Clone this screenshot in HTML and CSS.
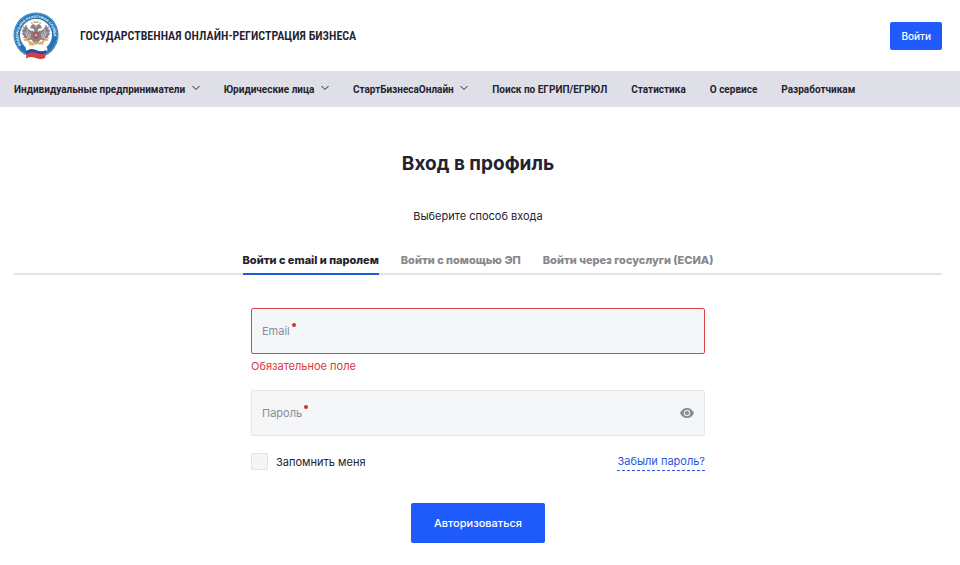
FILE: index.html
```
<!DOCTYPE html>
<html lang="ru">
<head>
  <meta charset="UTF-8" />
  <meta name="viewport" content="width=device-width, initial-scale=1.0" />
  <title>Вход в профиль</title>
  <link rel="stylesheet" href="styles.css">
</head>
<body>
  <!-- Header -->
  <header class="header">
    <a class="brand" href="#">
      <svg class="brand-logo" viewBox="0 0 92 96" aria-hidden="true">
        <defs>
          <path id="ring" d="M16.500 67 A35.500 35.500 0 1 1 75.500 67" />
        </defs>
        <circle cx="46" cy="46" r="45" fill="#2473b5" />
        <circle cx="46" cy="46" r="43" fill="none" stroke="#8ebbdc" stroke-width="1" />
        <circle cx="46" cy="46" r="32" fill="#fff" />
        <text class="ring-text"><textPath href="#ring">ФЕДЕРАЛЬНАЯ НАЛОГОВАЯ СЛУЖБА</textPath></text>
        <!-- eagle -->
        <g fill="#8b8087" stroke="#77707b" stroke-width="1">
          <path d="M40 38 C34 39 29 35 26 26 L24 32 L21 29 L22 37 L18 35 L21 43 L18 43 L23 49 L21 51 L28 53 L27 57 L35 55 L40 50 Z" />
          <path d="M52 38 C58 39 63 35 66 26 L68 32 L71 29 L70 37 L74 35 L71 43 L74 43 L69 49 L71 51 L64 53 L65 57 L57 55 L52 50 Z" />
          <path d="M43 42 L42 33 L35 32 L37 27 C40 23 45 25 45 30 L46 34 L47 30 C47 25 52 23 55 27 L57 32 L50 33 L49 42 Z" />
          <path d="M38 40 H54 L55 55 L46 65 L37 55 Z" />
        </g>
        <path d="M28 35 l3 14 M24 40 l5 10 M64 35 l-3 14 M68 40 l-5 10 M34 41 v11 M58 41 v11" stroke="#e0dde2" stroke-width="1.500" />
        <path d="M42 22 l-1 -5 l5 3 l5 -3 l-1 5 Z M36 24 l1 -4 l5 2 M50 22 l5 -2 l1 4" fill="#d9a45b" />
        <path d="M41 41 H51 V50 L46 54 L41 50 Z" fill="#b84149" />
        <path d="M46 43 v7 M43 46 h6" stroke="#eee" stroke-width="1.500" />
        <path d="M22 57 l11 -7 M70 57 l-11 -7 M30 58 q8 8 16 3 q8 5 16 -3 M32 65 h11 M49 63 h12" fill="none" stroke="#e0aa61" stroke-width="4" />
        <!-- flag -->
        <path d="M25 70 Q36 64 46 70 T68 70 L69 78 Q58 82 46 77 T27 79 Z" fill="#fff" />
        <path d="M26 78 Q36 71 46 76 T67 76 L66 84 Q56 88 46 83 T27 85 Z" fill="#254f9d" />
        <path d="M27 84 Q36 78 46 82 T66 82 L64 92 Q55 96 46 92 T26 93 Z" fill="#d33f48" />
      </svg>
      <span class="brand-name">ГОСУДАРСТВЕННАЯ ОНЛАЙН-РЕГИСТРАЦИЯ БИЗНЕСА</span>
    </a>
    <button class="login-button" type="button">Войти</button>
  </header>

  <!-- Main menu -->
  <nav class="menu">
    <a href="#">Индивидуальные предприниматели
      <svg class="chevron" viewBox="0 0 8 6" aria-hidden="true"><path d="M0.500 1 L4 4.500 L7.500 1" /></svg>
    </a>
    <a href="#">Юридические лица
      <svg class="chevron" viewBox="0 0 8 6" aria-hidden="true"><path d="M0.500 1 L4 4.500 L7.500 1" /></svg>
    </a>
    <a href="#">СтартБизнесаОнлайн
      <svg class="chevron" viewBox="0 0 8 6" aria-hidden="true"><path d="M0.500 1 L4 4.500 L7.500 1" /></svg>
    </a>
    <a href="#">Поиск по ЕГРИП/ЕГРЮЛ</a>
    <a href="#">Статистика</a>
    <a href="#">О сервисе</a>
    <a href="#">Разработчикам</a>
  </nav>

  <main class="content">
    <h1>Вход в профиль</h1>
    <p class="subtitle">Выберите способ входа</p>

    <div class="tabs" role="tablist">
      <button class="tab active" type="button" role="tab" aria-selected="true">Войти с email и паролем</button>
      <button class="tab" type="button" role="tab" aria-selected="false">Войти с помощью ЭП</button>
      <button class="tab" type="button" role="tab" aria-selected="false">Войти через госуслуги (ЕСИА)</button>
    </div>

    <!-- Login form -->
    <form class="login-form">
      <div class="field field-error">
        <label for="email">Email</label>
        <input type="email" id="email" aria-describedby="emailError" />
      </div>
      <p class="error" id="emailError">Обязательное поле</p>

      <div class="field">
        <label for="password">Пароль</label>
        <input type="password" id="password" />
        <button class="eye-button" type="button" aria-label="Показать пароль">
          <svg viewBox="0 0 14 10" aria-hidden="true">
            <path d="M7 0 C3.800 0 1.200 2 0 5 C1.200 8 3.800 10 7 10 S12.800 8 14 5 C12.800 2 10.200 0 7 0 Z" fill="#858995" />
            <circle cx="7" cy="5" r="2.700" fill="#858995" stroke="#e6e8eb" stroke-width="1.200" />
          </svg>
        </button>
      </div>

      <div class="form-options">
        <label class="remember" for="remember">
          <input type="checkbox" id="remember" />
          Запомнить меня
        </label>
        <a class="forgot" href="#">Забыли пароль?</a>
      </div>

      <button class="submit-button" type="submit">Авторизоваться</button>
    </form>
  </main>
</body>
</html>
```
FILE: styles.css
```
* {
  box-sizing: border-box;
}

body {
  margin: 0;
  background: #fff;
  color: #24222f;
  font-family: Inter, Roboto, sans-serif;
  font-size: 11px;
  line-height: 16px;
}

button,
input {
  font: inherit;
}

button {
  border: none;
  cursor: pointer;
}

a {
  color: inherit;
  text-decoration: none;
}

.header {
  display: flex;
  align-items: center;
  justify-content: space-between;
  padding: 12px 18px 11px 13px;
}

.brand {
  display: flex;
  align-items: center;
  gap: 21px;
}

.brand-logo {
  width: 46px;
  height: 48px;
}

.ring-text {
  font-family: "Liberation Sans", sans-serif;
  font-size: 7px;
  font-weight: bold;
  fill: #fff;
}

.brand-name {
  font-family: "Roboto Condensed", "Liberation Sans Narrow", Roboto, sans-serif;
  font-size: 12px;
  font-weight: 600;
}

.login-button,
.submit-button {
  background: #1f5bfb;
  color: #fff;
  border-radius: 2px;
  font-weight: 500;
}

.login-button {
  padding: 6px 11px;
  font-size: 10px;
}

/* Menu */
.menu {
  display: flex;
  gap: 24px;
  padding: 11px 14px 9px;
  background: #dfe0e7;
  font-family: Roboto, Inter, sans-serif;
  font-size: 10px;
  font-weight: 700;
  white-space: nowrap;
}

.chevron {
  width: 8px;
  height: 6px;
  margin: 0 0 2px 4px;
  fill: none;
  stroke: #24222f;
  stroke-width: 1;
}

/* Content */
.content {
  padding: 45px 18px 22px 14px;
}

h1 {
  margin: 0;
  font-size: 19px;
  line-height: 24px;
  font-weight: 700;
  text-align: center;
}

.subtitle {
  margin: 32px 0 28px;
  text-align: center;
}

.tabs {
  display: flex;
  justify-content: center;
  gap: 22px;
  border-bottom: 2px solid #e4e4e6;
}

.tab {
  margin-bottom: -2px;
  padding: 0 0 5px;
  background: none;
  border-bottom: 2px solid transparent;
  color: #85888e;
  font-weight: 800;
}

.tab.active {
  color: #24222f;
  border-bottom-color: #1f5bdb;
}

/* Form */
.login-form {
  display: flex;
  flex-direction: column;
  max-width: 454px;
  margin: 33px auto 0;
}

.field {
  display: flex;
  align-items: center;
  height: 46px;
  padding: 0 10px;
  background: #f5f6f8;
  border: 1px solid #e5e6e9;
  border-radius: 2px;
}

.field-error {
  border-color: #dc4545;
}

.field label {
  display: flex;
  gap: 2px;
  color: #888d9b;
}

/* required mark */
.field label::after {
  content: "";
  width: 4px;
  height: 4px;
  border-radius: 50%;
  background: #d12f35;
}

.field input {
  flex: 1;
  min-width: 0;
  border: none;
  outline: none;
  background: transparent;
}

.eye-button {
  display: flex;
  padding: 0;
  background: none;
}

.eye-button svg {
  width: 14px;
  height: 10px;
}

.error {
  margin: 4px 0 16px;
  color: #d93840;
}

.form-options {
  display: flex;
  align-items: center;
  justify-content: space-between;
  margin: 16px 0 32px;
}

.remember {
  display: flex;
  align-items: center;
  gap: 8px;
}

.remember input {
  appearance: none;
  width: 17px;
  height: 17px;
  margin: 0;
  background: #f5f5f6;
  border: 1px solid #e2e3e5;
  border-radius: 1px;
}

.remember input:checked {
  background: #1f5bfb;
}

.forgot {
  padding-top: 1px;
  padding-bottom: 1px;
  color: #2956df;
  border-bottom: 1px dashed #2956df;
}

.submit-button {
  align-self: center;
  padding: 12px 23px;
}

@media (max-width: 700px) {
  .menu,
  .tabs {
    flex-wrap: wrap;
  }
}
```
